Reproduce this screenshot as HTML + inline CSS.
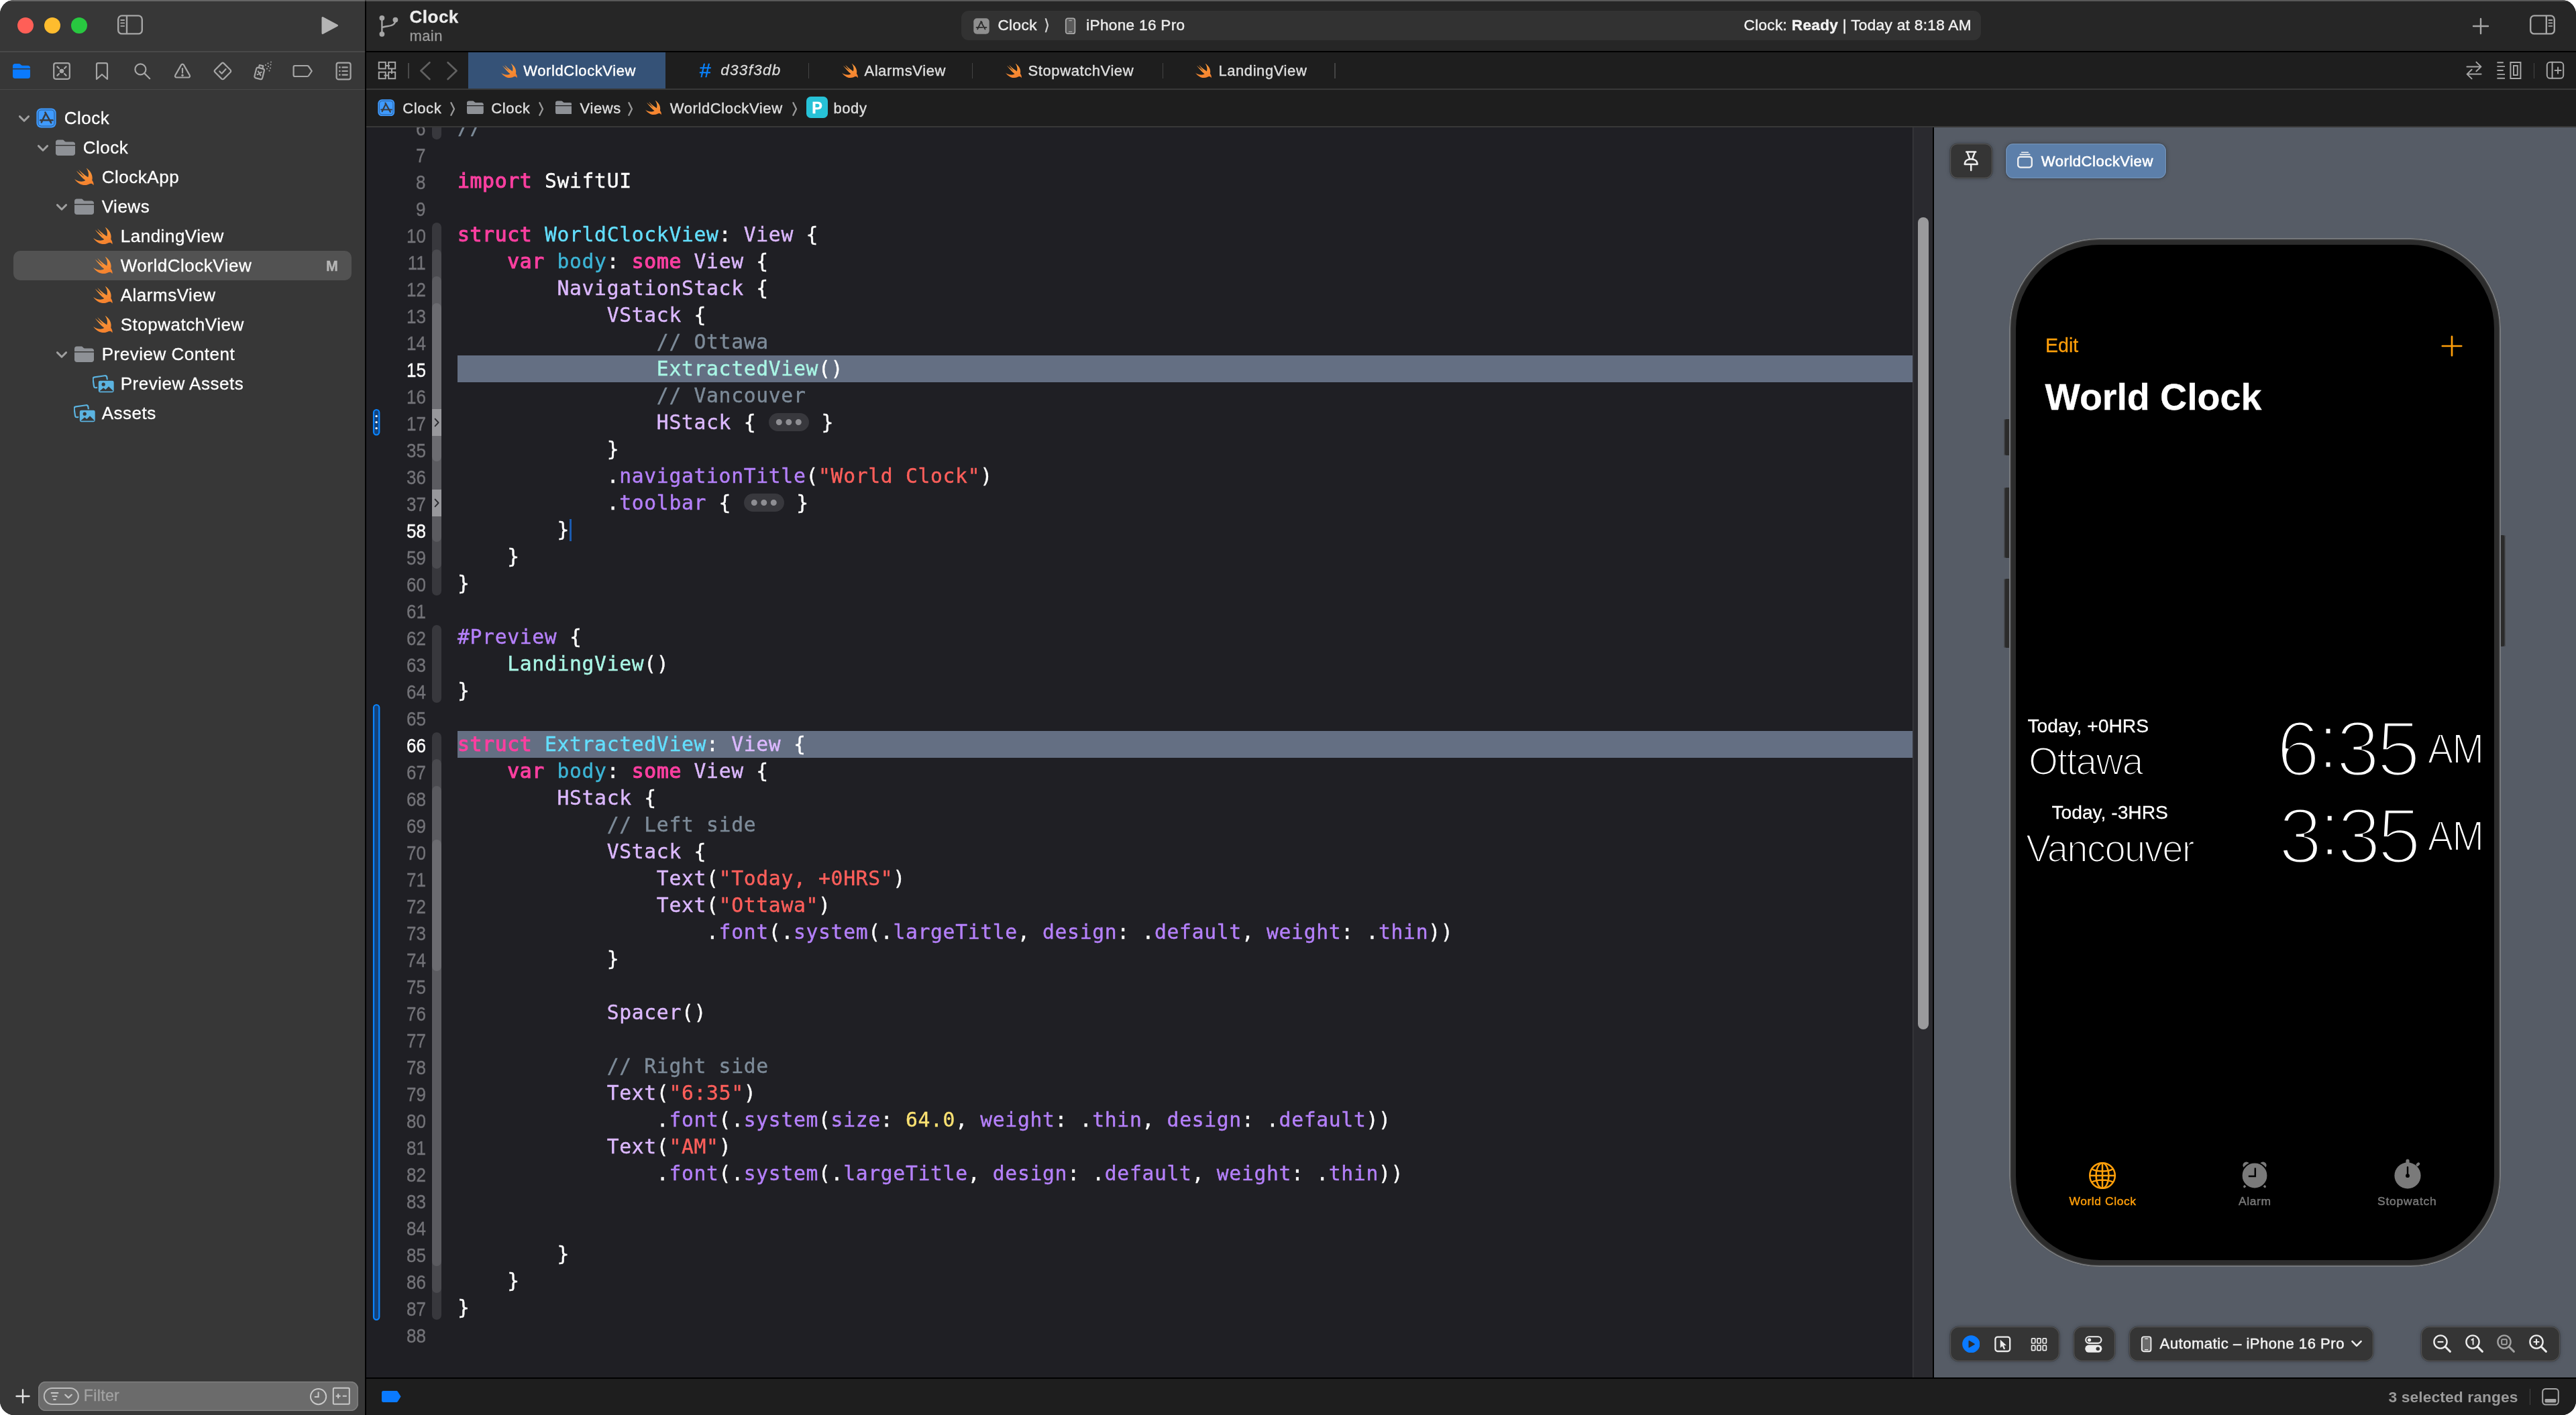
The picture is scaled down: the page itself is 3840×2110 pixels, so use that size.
<!DOCTYPE html>
<html lang="en"><head><meta charset="utf-8"><title>Clock — WorldClockView.swift</title>
<style>
html,body{margin:0;padding:0;background:#fff;}
body{width:3840px;height:2110px;overflow:hidden;position:relative;font-family:"Liberation Sans", sans-serif;}
#win{will-change:transform;position:absolute;left:0;top:0;width:3840px;height:2110px;border-radius:21px;overflow:hidden;background:#1e1e1e;}
.a{position:absolute;display:block;}
.t{position:absolute;white-space:nowrap;line-height:1;font-family:"Liberation Sans", sans-serif;-webkit-text-stroke-width:0.28px;}
.num{transform:scaleX(0.88);transform-origin:100% 50%;}
.cl{position:absolute;left:682.0px;height:40.0px;line-height:40.0px;white-space:pre;font-family:"DejaVu Sans Mono", "Liberation Mono", monospace;font-size:29.7px;color:#e3e3e6;letter-spacing:0.679px;-webkit-text-stroke-width:0.4px;}
.k{color:#fb3fa0;-webkit-text-stroke:1.15px #fb3fa0;}
.td{color:#63dfff;} .od{color:#3db5d6;} .pt{color:#a9f6e5;} .st{color:#dcb8ff;}
.fn{color:#b580fb;} .m{color:#b580fb;} .s{color:#ff5f5b;} .n{color:#fae172;} .c{color:#7d8b99;} .p{color:#fff;}
.fold{display:inline-block;width:60px;height:27px;line-height:27px;vertical-align:middle;margin-top:-3px;background:#38383d;border-radius:13.500px;text-align:center;color:#8e8e93;font-family:"Liberation Sans", sans-serif;font-size:33px;letter-spacing:2.9px;text-indent:2.9px;-webkit-text-stroke-width:0;}
</style></head>
<body><svg width="0" height="0" style="position:absolute"><defs><linearGradient id="sg" x1="0" y1="0" x2="0.300" y2="1"><stop offset="0" stop-color="#fda13e"/><stop offset="1" stop-color="#f5832f"/></linearGradient></defs></svg><div id="win">
<div class="a" style="left:0px;top:0px;width:544px;height:2110px;background:#373737;"></div>
<div class="a" style="left:0px;top:0px;width:3840px;height:1.6px;background:rgba(255,255,255,0.24);z-index:50;"></div>
<div class="a" style="left:26px;top:26px;width:24px;height:24px;background:#ff5f57;border-radius:12px;"></div>
<div class="a" style="left:66px;top:26px;width:24px;height:24px;background:#febc2e;border-radius:12px;"></div>
<div class="a" style="left:106px;top:26px;width:24px;height:24px;background:#28c840;border-radius:12px;"></div>
<svg class="a" style="left:174px;top:21px;" width="40" height="32" viewBox="0 0 40 32"><rect x="2.2" y="2.4" width="35.6" height="27" rx="5.5" fill="none" stroke="#a6a6a6" stroke-width="2.4"/><path d="M15 2.4v27" stroke="#a6a6a6" stroke-width="2.4"/><path d="M6.2 9h5M6.2 13.4h5M6.2 17.8h5" stroke="#a6a6a6" stroke-width="1.8" stroke-linecap="round"/></svg>
<svg class="a" style="left:477px;top:22px;" width="32" height="32" viewBox="0 0 32 32"><path d="M4 4.5v23l21.5-11.5z" fill="#b4b4b4" stroke="#b4b4b4" stroke-width="3" stroke-linejoin="round"/></svg>
<div class="a" style="left:0px;top:76px;width:544px;height:2px;background:#494949;"></div>
<svg class="a" style="left:17.0px;top:90.5px;" width="30" height="30" viewBox="0 0 30 30"><path fill="#0a7aff" d="M2 7.6C2 5.4 3.4 4 5.6 4h5.4c1.1 0 1.8 0.3 2.6 1.1l1 1c0.5 0.5 1 0.7 1.8 0.7h8c2.3 0 3.6 1.3 3.6 3.5V11H2z"/><path fill="#0a7aff" d="M2 12.6h26v9.8c0 2.3-1.3 3.6-3.6 3.6H5.6C3.3 26 2 24.7 2 22.4z"/></svg>
<svg class="a" style="left:77.0px;top:90.5px;" width="30" height="30" viewBox="0 0 30 30"><rect x="3.2" y="3.2" width="23.6" height="23.6" rx="3" fill="none" stroke="#a6a6a6" stroke-width="2.2" stroke-linecap="round" stroke-linejoin="round"/><circle cx="15" cy="15" r="3.3" fill="#a6a6a6"/><path d="M8.400 8.400l2.600 2.600M21.600 8.400l-2.600 2.600M8.400 21.600l2.600-2.600M21.600 21.600l-2.600-2.600" fill="none" stroke="#a6a6a6" stroke-width="2.2" stroke-linecap="round" stroke-linejoin="round" stroke-width="2"/></svg>
<svg class="a" style="left:137.0px;top:90.5px;" width="30" height="30" viewBox="0 0 30 30"><path d="M7 5.4c0-1.4 0.9-2.2 2.2-2.2h11.6c1.3 0 2.2 0.8 2.2 2.2V27l-8-7-8 7z" fill="none" stroke="#a6a6a6" stroke-width="2.2" stroke-linecap="round" stroke-linejoin="round"/></svg>
<svg class="a" style="left:197.0px;top:90.5px;" width="30" height="30" viewBox="0 0 30 30"><circle cx="12.400" cy="12.400" r="8" fill="none" stroke="#a6a6a6" stroke-width="2.2" stroke-linecap="round" stroke-linejoin="round" stroke-width="2.900"/><path d="M18.600 18.600l7.600 7.600" fill="none" stroke="#a6a6a6" stroke-width="2.2" stroke-linecap="round" stroke-linejoin="round" stroke-width="3.400"/></svg>
<svg class="a" style="left:257.0px;top:90.5px;" width="30" height="30" viewBox="0 0 30 30"><path d="M13.200 5.600c0.800-1.400 2.800-1.400 3.600 0l9 15.800c0.800 1.500-0.200 3.100-1.800 3.100H6c-1.600 0-2.600-1.600-1.800-3.100z" fill="none" stroke="#a6a6a6" stroke-width="2.2" stroke-linecap="round" stroke-linejoin="round"/><path d="M15 11.200v6.400" fill="none" stroke="#a6a6a6" stroke-width="2.2" stroke-linecap="round" stroke-linejoin="round" stroke-width="3"/><circle cx="15" cy="21.200" r="1.700" fill="#a6a6a6"/></svg>
<svg class="a" style="left:317.0px;top:90.5px;" width="30" height="30" viewBox="0 0 30 30"><path d="M13.2 3.6c1-1 2.6-1 3.6 0l9.6 9.6c1 1 1 2.6 0 3.6l-9.6 9.6c-1 1-2.6 1-3.6 0L3.600 16.8c-1-1-1-2.6 0-3.6z" fill="none" stroke="#a6a6a6" stroke-width="2.2" stroke-linecap="round" stroke-linejoin="round"/><path d="M10.400 15.400l3.200 3.300 6-6.600" fill="none" stroke="#a6a6a6" stroke-width="2.2" stroke-linecap="round" stroke-linejoin="round"/></svg>
<svg class="a" style="left:376.0px;top:89.5px;" width="32" height="32" viewBox="0 0 32 32"><g transform="rotate(14 11 18)"><rect x="5" y="11.5" width="12" height="16" rx="2.4" fill="none" stroke="#a6a6a6" stroke-width="2.2" stroke-linecap="round" stroke-linejoin="round" stroke-width="2"/><path d="M8.2 11.400V7.400h5.600v4" fill="none" stroke="#a6a6a6" stroke-width="2.2" stroke-linecap="round" stroke-linejoin="round" stroke-width="2"/><path d="M8.6 17l4.800 4.800M13.400 17l-4.800 4.800" fill="none" stroke="#a6a6a6" stroke-width="2.2" stroke-linecap="round" stroke-linejoin="round" stroke-width="1.8"/></g><g fill="#a6a6a6"><circle cx="20" cy="7" r="1.1"/><circle cx="23.500" cy="4.500" r="1.1"/><circle cx="24" cy="9" r="1.1"/><circle cx="27.500" cy="6.500" r="1"/><circle cx="22" cy="12.500" r="1.1"/><circle cx="27" cy="11.500" r="1"/><circle cx="25.500" cy="15.500" r="1"/><circle cx="28" cy="2.500" r="0.9"/></g></svg>
<svg class="a" style="left:436.0px;top:90.5px;" width="32" height="30" viewBox="0 0 32 30"><path d="M3.600 7h18.400c0.900 0 1.500 0.300 2 1l4.800 7-4.800 7c-0.500 0.700-1.100 1-2 1H3.600c-1.300 0-2-0.800-2-2V9c0-1.200 0.700-2 2-2z" fill="none" stroke="#a6a6a6" stroke-width="2.2" stroke-linecap="round" stroke-linejoin="round"/></svg>
<svg class="a" style="left:497.0px;top:90.5px;" width="30" height="30" viewBox="0 0 30 30"><rect x="4.600" y="2.600" width="21" height="24.800" rx="3" fill="none" stroke="#a6a6a6" stroke-width="2.2" stroke-linecap="round" stroke-linejoin="round"/><path d="M13.400 9.400h7.400M13.400 15h7.400M13.400 20.600h7.400" fill="none" stroke="#a6a6a6" stroke-width="2.2" stroke-linecap="round" stroke-linejoin="round" stroke-width="2"/><circle cx="9.400" cy="9.400" r="1.300" fill="#a6a6a6"/><circle cx="9.400" cy="15" r="1.300" fill="#a6a6a6"/><circle cx="9.400" cy="20.600" r="1.300" fill="#a6a6a6"/></svg>
<div class="a" style="left:0px;top:132.5px;width:544px;height:1.6px;background:#494949;"></div>
<svg class="a" style="left:26px;top:169.5px;" width="20" height="14" viewBox="0 0 20 14"><path d="M3.400 3.600l6.600 6.600 6.600-6.600" fill="none" stroke="#a0a0a0" stroke-width="2.900" stroke-linecap="round" stroke-linejoin="round"/></svg>
<svg class="a" style="left:54.0px;top:161.0px;" width="30" height="30" viewBox="0 0 30 30"><rect x="0.4" y="0.4" width="29.2" height="29.2" rx="7" fill="#3f9bff"/><rect x="3" y="3" width="24" height="24" rx="4.4" fill="none" stroke="#2a5c96" stroke-width="1.1"/><g stroke="#3a3d42" stroke-width="2.5" stroke-linecap="round" fill="none"><path d="M13.6 9.4L7.8 21.4"/><path d="M13.4 6.6L22.2 22.2"/><path d="M6.2 18.2h18.2"/></g></svg>
<div class="t" style="left:95.70px;top:163.39px;font-size:26px;color:#fff;letter-spacing:0.52px;-webkit-text-stroke:0.3px #fff;">Clock</div>
<svg class="a" style="left:54px;top:213.5px;" width="20" height="14" viewBox="0 0 20 14"><path d="M3.400 3.600l6.600 6.600 6.600-6.600" fill="none" stroke="#a0a0a0" stroke-width="2.900" stroke-linecap="round" stroke-linejoin="round"/></svg>
<svg class="a" style="left:82.7px;top:207.8px;" width="29" height="24" viewBox="0 0 29 24"><path fill="#8e9196" d="M0 4.2C0 1.9 1.4 0.6 3.6 0.6h6.2c1.2 0 1.9 0.3 2.7 1.1l1 1c0.5 0.5 1 0.7 1.8 0.7h10c2.3 0 3.7 1.4 3.7 3.6V8H0z"/><path fill="#8e9196" d="M0 9.6h29v10.6c0 2.4-1.4 3.8-3.8 3.8H3.8C1.4 24 0 22.6 0 20.2z"/></svg>
<div class="t" style="left:123.70px;top:207.39px;font-size:26px;color:#fff;letter-spacing:0.52px;-webkit-text-stroke:0.3px #fff;">Clock</div>
<svg class="a" style="left:110.9px;top:251.3px;overflow:visible;" width="29" height="25" viewBox="2.75 3.6 17.6 15.9"><path fill="url(#sg)" d="M13.543 3.41c4.114 2.47 6.545 7.162 5.549 11.131-.024.093-.05.181-.076.272l.002.001c2.062 2.538 1.5 5.258 1.236 4.745-1.072-2.086-3.066-1.568-4.088-1.043a6.803 6.803 0 0 1-.281.158l-.02.012-.002.002c-2.115 1.123-4.957 1.205-7.812-.022a12.568 12.568 0 0 1-5.64-4.838c.649.48 1.35.902 2.097 1.252 3.019 1.414 6.051 1.311 8.197-.002C9.651 12.73 7.101 9.67 5.146 7.191a10.628 10.628 0 0 1-1.005-1.384c2.34 2.142 6.038 4.83 7.365 5.576C8.69 8.408 6.208 4.743 6.324 4.86c4.436 4.47 8.528 6.996 8.528 6.996.154.085.27.154.36.213.085-.215.16-.437.224-.668.708-2.588-.09-5.548-1.893-7.992z"/></svg>
<div class="t" style="left:151.70px;top:251.39px;font-size:26px;color:#fff;letter-spacing:0.52px;-webkit-text-stroke:0.3px #fff;">ClockApp</div>
<svg class="a" style="left:82px;top:301.5px;" width="20" height="14" viewBox="0 0 20 14"><path d="M3.400 3.600l6.600 6.600 6.600-6.600" fill="none" stroke="#a0a0a0" stroke-width="2.900" stroke-linecap="round" stroke-linejoin="round"/></svg>
<svg class="a" style="left:110.7px;top:295.8px;" width="29" height="24" viewBox="0 0 29 24"><path fill="#8e9196" d="M0 4.2C0 1.9 1.4 0.6 3.6 0.6h6.2c1.2 0 1.9 0.3 2.7 1.1l1 1c0.5 0.5 1 0.7 1.8 0.7h10c2.3 0 3.7 1.4 3.7 3.6V8H0z"/><path fill="#8e9196" d="M0 9.6h29v10.6c0 2.4-1.4 3.8-3.8 3.8H3.8C1.4 24 0 22.6 0 20.2z"/></svg>
<div class="t" style="left:151.70px;top:295.39px;font-size:26px;color:#fff;letter-spacing:0.52px;-webkit-text-stroke:0.3px #fff;">Views</div>
<svg class="a" style="left:138.9px;top:339.3px;overflow:visible;" width="29" height="25" viewBox="2.75 3.6 17.6 15.9"><path fill="url(#sg)" d="M13.543 3.41c4.114 2.47 6.545 7.162 5.549 11.131-.024.093-.05.181-.076.272l.002.001c2.062 2.538 1.5 5.258 1.236 4.745-1.072-2.086-3.066-1.568-4.088-1.043a6.803 6.803 0 0 1-.281.158l-.02.012-.002.002c-2.115 1.123-4.957 1.205-7.812-.022a12.568 12.568 0 0 1-5.64-4.838c.649.48 1.35.902 2.097 1.252 3.019 1.414 6.051 1.311 8.197-.002C9.651 12.73 7.101 9.67 5.146 7.191a10.628 10.628 0 0 1-1.005-1.384c2.34 2.142 6.038 4.83 7.365 5.576C8.69 8.408 6.208 4.743 6.324 4.86c4.436 4.47 8.528 6.996 8.528 6.996.154.085.27.154.36.213.085-.215.16-.437.224-.668.708-2.588-.09-5.548-1.893-7.992z"/></svg>
<div class="t" style="left:179.70px;top:339.39px;font-size:26px;color:#fff;letter-spacing:0.52px;-webkit-text-stroke:0.3px #fff;">LandingView</div>
<div class="a" style="left:20px;top:374.1px;width:504px;height:43.6px;background:#525252;border-radius:10px;"></div>
<div class="t" style="left:486.00px;top:386.50px;font-size:21.5px;color:#b6b6b6;font-weight:bold;">M</div>
<svg class="a" style="left:138.9px;top:383.3px;overflow:visible;" width="29" height="25" viewBox="2.75 3.6 17.6 15.9"><path fill="url(#sg)" d="M13.543 3.41c4.114 2.47 6.545 7.162 5.549 11.131-.024.093-.05.181-.076.272l.002.001c2.062 2.538 1.5 5.258 1.236 4.745-1.072-2.086-3.066-1.568-4.088-1.043a6.803 6.803 0 0 1-.281.158l-.02.012-.002.002c-2.115 1.123-4.957 1.205-7.812-.022a12.568 12.568 0 0 1-5.64-4.838c.649.48 1.35.902 2.097 1.252 3.019 1.414 6.051 1.311 8.197-.002C9.651 12.73 7.101 9.67 5.146 7.191a10.628 10.628 0 0 1-1.005-1.384c2.34 2.142 6.038 4.83 7.365 5.576C8.69 8.408 6.208 4.743 6.324 4.86c4.436 4.47 8.528 6.996 8.528 6.996.154.085.27.154.36.213.085-.215.16-.437.224-.668.708-2.588-.09-5.548-1.893-7.992z"/></svg>
<div class="t" style="left:179.70px;top:383.39px;font-size:26px;color:#fff;letter-spacing:0.52px;-webkit-text-stroke:0.3px #fff;">WorldClockView</div>
<svg class="a" style="left:138.9px;top:427.3px;overflow:visible;" width="29" height="25" viewBox="2.75 3.6 17.6 15.9"><path fill="url(#sg)" d="M13.543 3.41c4.114 2.47 6.545 7.162 5.549 11.131-.024.093-.05.181-.076.272l.002.001c2.062 2.538 1.5 5.258 1.236 4.745-1.072-2.086-3.066-1.568-4.088-1.043a6.803 6.803 0 0 1-.281.158l-.02.012-.002.002c-2.115 1.123-4.957 1.205-7.812-.022a12.568 12.568 0 0 1-5.64-4.838c.649.48 1.35.902 2.097 1.252 3.019 1.414 6.051 1.311 8.197-.002C9.651 12.73 7.101 9.67 5.146 7.191a10.628 10.628 0 0 1-1.005-1.384c2.34 2.142 6.038 4.83 7.365 5.576C8.69 8.408 6.208 4.743 6.324 4.86c4.436 4.47 8.528 6.996 8.528 6.996.154.085.27.154.36.213.085-.215.16-.437.224-.668.708-2.588-.09-5.548-1.893-7.992z"/></svg>
<div class="t" style="left:179.70px;top:427.39px;font-size:26px;color:#fff;letter-spacing:0.52px;-webkit-text-stroke:0.3px #fff;">AlarmsView</div>
<svg class="a" style="left:138.9px;top:471.3px;overflow:visible;" width="29" height="25" viewBox="2.75 3.6 17.6 15.9"><path fill="url(#sg)" d="M13.543 3.41c4.114 2.47 6.545 7.162 5.549 11.131-.024.093-.05.181-.076.272l.002.001c2.062 2.538 1.5 5.258 1.236 4.745-1.072-2.086-3.066-1.568-4.088-1.043a6.803 6.803 0 0 1-.281.158l-.02.012-.002.002c-2.115 1.123-4.957 1.205-7.812-.022a12.568 12.568 0 0 1-5.64-4.838c.649.48 1.35.902 2.097 1.252 3.019 1.414 6.051 1.311 8.197-.002C9.651 12.73 7.101 9.67 5.146 7.191a10.628 10.628 0 0 1-1.005-1.384c2.34 2.142 6.038 4.83 7.365 5.576C8.69 8.408 6.208 4.743 6.324 4.86c4.436 4.47 8.528 6.996 8.528 6.996.154.085.27.154.36.213.085-.215.16-.437.224-.668.708-2.588-.09-5.548-1.893-7.992z"/></svg>
<div class="t" style="left:179.70px;top:471.39px;font-size:26px;color:#fff;letter-spacing:0.52px;-webkit-text-stroke:0.3px #fff;">StopwatchView</div>
<svg class="a" style="left:82px;top:521.5px;" width="20" height="14" viewBox="0 0 20 14"><path d="M3.400 3.600l6.600 6.600 6.600-6.600" fill="none" stroke="#a0a0a0" stroke-width="2.900" stroke-linecap="round" stroke-linejoin="round"/></svg>
<svg class="a" style="left:110.7px;top:515.8px;" width="29" height="24" viewBox="0 0 29 24"><path fill="#8e9196" d="M0 4.2C0 1.9 1.4 0.6 3.6 0.6h6.2c1.2 0 1.9 0.3 2.7 1.1l1 1c0.5 0.5 1 0.7 1.8 0.7h10c2.3 0 3.7 1.4 3.7 3.6V8H0z"/><path fill="#8e9196" d="M0 9.6h29v10.6c0 2.4-1.4 3.8-3.8 3.8H3.8C1.4 24 0 22.6 0 20.2z"/></svg>
<div class="t" style="left:151.70px;top:515.39px;font-size:26px;color:#fff;letter-spacing:0.52px;-webkit-text-stroke:0.3px #fff;">Preview Content</div>
<svg class="a" style="left:137.9px;top:558.5px;" width="34" height="28" viewBox="0 0 34 28"><g transform="rotate(-8 12 11)"><rect x="1.3" y="2.2" width="21" height="16" rx="3" fill="none" stroke="#5bb3e0" stroke-width="2.2"/></g><rect x="8" y="8" width="24.5" height="19" rx="3.2" fill="#5bb3e0" stroke="#373737" stroke-width="1.6"/><circle cx="16.2" cy="14.2" r="2.6" fill="#373737"/><path d="M10.2 24.6l6-5.4 3.2 2.8 4.6-4.8 6.3 6.2v1.2h-20z" fill="#373737"/></svg>
<div class="t" style="left:179.70px;top:559.39px;font-size:26px;color:#fff;letter-spacing:0.52px;-webkit-text-stroke:0.3px #fff;">Preview Assets</div>
<svg class="a" style="left:109.9px;top:602.5px;" width="34" height="28" viewBox="0 0 34 28"><g transform="rotate(-8 12 11)"><rect x="1.3" y="2.2" width="21" height="16" rx="3" fill="none" stroke="#5bb3e0" stroke-width="2.2"/></g><rect x="8" y="8" width="24.5" height="19" rx="3.2" fill="#5bb3e0" stroke="#373737" stroke-width="1.6"/><circle cx="16.2" cy="14.2" r="2.6" fill="#373737"/><path d="M10.2 24.6l6-5.4 3.2 2.8 4.6-4.8 6.3 6.2v1.2h-20z" fill="#373737"/></svg>
<div class="t" style="left:151.70px;top:603.39px;font-size:26px;color:#fff;letter-spacing:0.52px;-webkit-text-stroke:0.3px #fff;">Assets</div>
<svg class="a" style="left:22px;top:2070px;" width="24" height="24" viewBox="0 0 24 24"><path d="M12 2.500v19M2.500 12h19" stroke="#e4e4e4" stroke-width="2.400" stroke-linecap="round"/></svg>
<div class="a" style="left:56.5px;top:2060px;width:477px;height:44px;background:#6b6b6b;border-radius:11px;box-shadow:inset 0 0 0 1.5px #7e7e7e;"></div>
<svg class="a" style="left:64px;top:2068px;" width="56" height="28" viewBox="0 0 56 28"><rect x="1.800" y="2" width="51" height="24" rx="12" fill="none" stroke="#bdbdbd" stroke-width="2"/><path d="M11.800 9.200h11.400M13.600 14h7.800M15.400 18.800h4.200" stroke="#c4c4c4" stroke-width="2.200"/><path d="M33.200 11.800l4.800 4.600 4.800-4.600" fill="none" stroke="#c4c4c4" stroke-width="2.200" stroke-linecap="round" stroke-linejoin="round"/></svg>
<div class="t" style="left:124.80px;top:2069.76px;font-size:23.2px;color:#a3a3a3;letter-spacing:0.3px;">Filter</div>
<svg class="a" style="left:461px;top:2068.5px;" width="28" height="28" viewBox="0 0 28 28"><circle cx="13.600" cy="13.600" r="11.600" fill="none" stroke="#c8c8c8" stroke-width="2"/><path d="M13.600 6.600v7.400H7.800" fill="none" stroke="#c8c8c8" stroke-width="2"/></svg>
<svg class="a" style="left:495px;top:2068px;" width="28" height="28" viewBox="0 0 28 28"><rect x="1.800" y="1.800" width="24" height="24" rx="1.500" fill="none" stroke="#c8c8c8" stroke-width="2"/><path d="M5.600 13.800h7M9.100 10.300v7M15.800 13.800h6" stroke="#c8c8c8" stroke-width="2"/></svg>
<div class="a" style="left:544px;top:0px;width:2px;height:2110px;background:#000;"></div>
<div class="a" style="left:546px;top:0px;width:3294px;height:76px;background:#262626;"></div>
<div class="a" style="left:546px;top:76px;width:3294px;height:2px;background:#000;"></div>
<svg class="a" style="left:563px;top:21px;" width="34" height="36" viewBox="0 0 34 36"><g fill="#a6a6a6"><circle cx="6.400" cy="5.800" r="3.900"/><circle cx="6.400" cy="29.800" r="3.900"/><circle cx="26.400" cy="8.600" r="3.900"/></g><path d="M6.400 6v24M6.400 20.400c0 0 2-1.600 9-2.400 8-1 11-3.400 11-9.400" fill="none" stroke="#a6a6a6" stroke-width="2.400"/></svg>
<div class="t" style="left:610.50px;top:11.59px;font-size:26px;color:#ececec;font-weight:bold;letter-spacing:0.5px;">Clock</div>
<div class="t" style="left:610.50px;top:42.77px;font-size:22px;color:#9d9d9d;letter-spacing:0.4px;">main</div>
<div class="a" style="left:1433px;top:16px;width:1519.5px;height:44px;background:#323232;border-radius:11px;"></div>
<svg class="a" style="left:1450.5px;top:26.5px;" width="24" height="24" viewBox="0 0 24 24"><rect x="0.300" y="0.300" width="23.400" height="23.400" rx="5" fill="#8f8f8f"/><g stroke="#2c2c2c" stroke-width="1.900" stroke-linecap="round" fill="none"><path d="M10.600 7.200L6.200 16.400"/><path d="M12 5.200l0.900 1.700"/><path d="M11.100 5.200l6.300 11.200"/><path d="M4.600 13.900h9.200"/><path d="M16.500 13.900h2.900"/></g></svg>
<div class="t" style="left:1487.40px;top:27.16px;font-size:22.6px;color:#ebebeb;letter-spacing:0.4px;-webkit-text-stroke-width:0.45px;">Clock</div>
<div class="t" style="left:1556.00px;top:27.15px;font-size:22.5px;color:#d6d6d6;font-family:"DejaVu Sans", sans-serif;-webkit-text-stroke-width:0.7px;">⟩</div>
<svg class="a" style="left:1587px;top:25.5px;" width="18" height="26" viewBox="0 0 18 26"><rect x="1.800" y="1.400" width="13.600" height="22.800" rx="3" fill="#5a5a5a" stroke="#a8a8a8" stroke-width="1.800"/><path d="M6.400 4.600h4.400M6 21.400h5.200" stroke="#a8a8a8" stroke-width="1.300"/></svg>
<div class="t" style="left:1619.30px;top:27.16px;font-size:22.6px;color:#ebebeb;letter-spacing:0.3px;-webkit-text-stroke-width:0.45px;">iPhone 16 Pro</div>
<div class="t" style="left:2599.50px;top:27.16px;font-size:22.6px;color:#f2f2f2;letter-spacing:0.32px;-webkit-text-stroke-width:0.4px;">Clock: <b>Ready</b> | Today at 8:18 AM</div>
<svg class="a" style="left:3685px;top:25.5px;" width="26" height="26" viewBox="0 0 26 26"><path d="M13 2v22M2 13h22" stroke="#a6a6a6" stroke-width="2.400" stroke-linecap="round"/></svg>
<svg class="a" style="left:3770px;top:21px;" width="40" height="32" viewBox="0 0 40 32"><rect x="2.200" y="2.400" width="35.600" height="27" rx="5.500" fill="none" stroke="#a6a6a6" stroke-width="2.400"/><path d="M25.800 2.400v27" stroke="#a6a6a6" stroke-width="2.400"/><path d="M29.400 9h5M29.400 13.400h5M29.400 17.800h5" stroke="#a6a6a6" stroke-width="1.800" stroke-linecap="round"/></svg>
<div class="a" style="left:546px;top:78px;width:3294px;height:54px;background:#1e1e1e;"></div>
<div class="a" style="left:546px;top:132px;width:3294px;height:1.5px;background:#383838;"></div>
<svg class="a" style="left:563px;top:91.4px;" width="28" height="28" viewBox="0 0 28 28"><g fill="none" stroke="#a6a6a6" stroke-width="2"><rect x="1.800" y="1.800" width="10" height="9.600"/><rect x="16.200" y="1.800" width="10" height="9.600"/><rect x="1.800" y="16.600" width="10" height="9.600"/><rect x="16.200" y="16.600" width="10" height="9.600"/><path d="M11.800 7h6.200M21 11.400v7.600M9.400 21.400h6.800"/></g></svg>
<div class="a" style="left:608px;top:94px;width:1.5px;height:22.5px;background:#4a4a4a;"></div>
<svg class="a" style="left:623px;top:89.5px;" width="22" height="32" viewBox="0 0 22 32"><path d="M17.400 3.200L4.400 15.600l13 12.400" fill="none" stroke="#616161" stroke-width="2.700" stroke-linecap="round" stroke-linejoin="round"/></svg>
<svg class="a" style="left:663px;top:89.5px;" width="22" height="32" viewBox="0 0 22 32"><path d="M4.600 3.200L17.600 15.600l-13 12.400" fill="none" stroke="#616161" stroke-width="2.700" stroke-linecap="round" stroke-linejoin="round"/></svg>
<div class="a" style="left:698px;top:78px;width:294px;height:54px;background:#355277;"></div>
<svg class="a" style="left:747px;top:95px;overflow:visible;" width="24" height="21" viewBox="2.75 3.6 17.6 15.9"><path fill="url(#sg)" d="M13.543 3.41c4.114 2.47 6.545 7.162 5.549 11.131-.024.093-.05.181-.076.272l.002.001c2.062 2.538 1.5 5.258 1.236 4.745-1.072-2.086-3.066-1.568-4.088-1.043a6.803 6.803 0 0 1-.281.158l-.02.012-.002.002c-2.115 1.123-4.957 1.205-7.812-.022a12.568 12.568 0 0 1-5.64-4.838c.649.48 1.35.902 2.097 1.252 3.019 1.414 6.051 1.311 8.197-.002C9.651 12.73 7.101 9.67 5.146 7.191a10.628 10.628 0 0 1-1.005-1.384c2.34 2.142 6.038 4.83 7.365 5.576C8.69 8.408 6.208 4.743 6.324 4.86c4.436 4.47 8.528 6.996 8.528 6.996.154.085.27.154.36.213.085-.215.16-.437.224-.668.708-2.588-.09-5.548-1.893-7.992z"/></svg>
<div class="t" style="left:780.30px;top:94.67px;font-size:22px;color:#fff;letter-spacing:0.6px;-webkit-text-stroke-width:0.42px;">WorldClockView</div>
<div class="t" style="left:1042.60px;top:90.10px;font-size:30px;color:#0a84ff;font-style:italic;-webkit-text-stroke:0.5px #0a84ff;">#</div>
<div class="t" style="left:1074.20px;top:94.16px;font-size:22.6px;color:#dcdcdc;letter-spacing:1.25px;font-style:italic;">d33f3db</div>
<div class="a" style="left:1204.5px;top:94px;width:1.5px;height:23px;background:#444;"></div>
<svg class="a" style="left:1254.5px;top:95px;overflow:visible;" width="24" height="21" viewBox="2.75 3.6 17.6 15.9"><path fill="url(#sg)" d="M13.543 3.41c4.114 2.47 6.545 7.162 5.549 11.131-.024.093-.05.181-.076.272l.002.001c2.062 2.538 1.5 5.258 1.236 4.745-1.072-2.086-3.066-1.568-4.088-1.043a6.803 6.803 0 0 1-.281.158l-.02.012-.002.002c-2.115 1.123-4.957 1.205-7.812-.022a12.568 12.568 0 0 1-5.64-4.838c.649.48 1.35.902 2.097 1.252 3.019 1.414 6.051 1.311 8.197-.002C9.651 12.73 7.101 9.67 5.146 7.191a10.628 10.628 0 0 1-1.005-1.384c2.34 2.142 6.038 4.83 7.365 5.576C8.69 8.408 6.208 4.743 6.324 4.86c4.436 4.47 8.528 6.996 8.528 6.996.154.085.27.154.36.213.085-.215.16-.437.224-.668.708-2.588-.09-5.548-1.893-7.992z"/></svg>
<div class="t" style="left:1288.40px;top:94.67px;font-size:22px;color:#dedede;letter-spacing:0.58px;-webkit-text-stroke-width:0.42px;">AlarmsView</div>
<div class="a" style="left:1448.5px;top:94px;width:1.5px;height:23px;background:#444;"></div>
<svg class="a" style="left:1498.5px;top:95px;overflow:visible;" width="24" height="21" viewBox="2.75 3.6 17.6 15.9"><path fill="url(#sg)" d="M13.543 3.41c4.114 2.47 6.545 7.162 5.549 11.131-.024.093-.05.181-.076.272l.002.001c2.062 2.538 1.5 5.258 1.236 4.745-1.072-2.086-3.066-1.568-4.088-1.043a6.803 6.803 0 0 1-.281.158l-.02.012-.002.002c-2.115 1.123-4.957 1.205-7.812-.022a12.568 12.568 0 0 1-5.64-4.838c.649.48 1.35.902 2.097 1.252 3.019 1.414 6.051 1.311 8.197-.002C9.651 12.73 7.101 9.67 5.146 7.191a10.628 10.628 0 0 1-1.005-1.384c2.34 2.142 6.038 4.83 7.365 5.576C8.69 8.408 6.208 4.743 6.324 4.86c4.436 4.47 8.528 6.996 8.528 6.996.154.085.27.154.36.213.085-.215.16-.437.224-.668.708-2.588-.09-5.548-1.893-7.992z"/></svg>
<div class="t" style="left:1532.60px;top:94.67px;font-size:22px;color:#dedede;letter-spacing:0.58px;-webkit-text-stroke-width:0.42px;">StopwatchView</div>
<div class="a" style="left:1732.5px;top:94px;width:1.5px;height:23px;background:#444;"></div>
<svg class="a" style="left:1782px;top:95px;overflow:visible;" width="24" height="21" viewBox="2.75 3.6 17.6 15.9"><path fill="url(#sg)" d="M13.543 3.41c4.114 2.47 6.545 7.162 5.549 11.131-.024.093-.05.181-.076.272l.002.001c2.062 2.538 1.5 5.258 1.236 4.745-1.072-2.086-3.066-1.568-4.088-1.043a6.803 6.803 0 0 1-.281.158l-.02.012-.002.002c-2.115 1.123-4.957 1.205-7.812-.022a12.568 12.568 0 0 1-5.64-4.838c.649.48 1.35.902 2.097 1.252 3.019 1.414 6.051 1.311 8.197-.002C9.651 12.73 7.101 9.67 5.146 7.191a10.628 10.628 0 0 1-1.005-1.384c2.34 2.142 6.038 4.83 7.365 5.576C8.69 8.408 6.208 4.743 6.324 4.86c4.436 4.47 8.528 6.996 8.528 6.996.154.085.27.154.36.213.085-.215.16-.437.224-.668.708-2.588-.09-5.548-1.893-7.992z"/></svg>
<div class="t" style="left:1816.40px;top:94.67px;font-size:22px;color:#dedede;letter-spacing:0.58px;-webkit-text-stroke-width:0.42px;">LandingView</div>
<div class="a" style="left:1989px;top:94px;width:1.5px;height:23px;background:#444;"></div>
<svg class="a" style="left:3674px;top:90px;" width="28" height="30" viewBox="0 0 28 30"><path d="M3.400 9.400h21M17.400 2.600l7 6.800-7 6.800M24.600 20.600h-21M10.600 13.800l-7 6.800 7 6.800" fill="none" stroke="#a6a6a6" stroke-width="2" stroke-linecap="round" stroke-linejoin="round"/></svg>
<svg class="a" style="left:3720px;top:90px;" width="40" height="30" viewBox="0 0 40 30"><path d="M2.400 3.200h9.400M2.400 9.100h11.600M2.400 15h9.400M2.400 20.900h11.600M2.400 26.800h11.600" stroke="#a6a6a6" stroke-width="1.900"/><rect x="22.400" y="3" width="15" height="24" fill="none" stroke="#a6a6a6" stroke-width="2"/><rect x="27" y="8" width="5.800" height="14" fill="none" stroke="#a6a6a6" stroke-width="2"/></svg>
<div class="a" style="left:3776.5px;top:94px;width:1.5px;height:23px;background:#444;"></div>
<svg class="a" style="left:3795px;top:91px;" width="28" height="28" viewBox="0 0 28 28"><rect x="1.800" y="1.800" width="24.400" height="24" rx="4.500" fill="none" stroke="#a6a6a6" stroke-width="2" stroke-linecap="round" stroke-linejoin="round"/><path d="M9.600 1.800v24" fill="none" stroke="#a6a6a6" stroke-width="2" stroke-linecap="round" stroke-linejoin="round"/><path d="M13.600 14h9M18.100 9.500v9" fill="none" stroke="#a6a6a6" stroke-width="2" stroke-linecap="round" stroke-linejoin="round"/></svg>
<div class="a" style="left:546px;top:133.5px;width:3294px;height:55px;background:#1e1e1e;"></div>
<div class="a" style="left:546px;top:188px;width:3294px;height:1.5px;background:#383838;"></div>
<svg class="a" style="left:563px;top:147.6px;" width="25.5" height="25.5" viewBox="0 0 30 30"><rect x="0.4" y="0.4" width="29.2" height="29.2" rx="7" fill="#3f9bff"/><rect x="3" y="3" width="24" height="24" rx="4.4" fill="none" stroke="#2a5c96" stroke-width="1.1"/><g stroke="#3a3d42" stroke-width="2.5" stroke-linecap="round" fill="none"><path d="M13.6 9.4L7.8 21.4"/><path d="M13.4 6.6L22.2 22.2"/><path d="M6.2 18.2h18.2"/></g></svg>
<div class="t" style="left:600.20px;top:151.27px;font-size:22px;color:#dedede;letter-spacing:0.62px;-webkit-text-stroke-width:0.42px;">Clock</div>
<svg class="a" style="left:670.5px;top:151.5px;" width="8" height="21" viewBox="0 0 8 21"><path d="M1.400 1.200l4.600 9.300-4.600 9.300" fill="none" stroke="#9a9a9a" stroke-width="2.300" stroke-linecap="round" stroke-linejoin="round"/></svg>
<svg class="a" style="left:696px;top:149.8px;" width="24.8" height="20.6" viewBox="0 0 29 24"><path fill="#8e9196" d="M0 4.2C0 1.9 1.4 0.6 3.6 0.6h6.2c1.2 0 1.9 0.3 2.7 1.1l1 1c0.5 0.5 1 0.7 1.8 0.7h10c2.3 0 3.7 1.4 3.7 3.6V8H0z"/><path fill="#8e9196" d="M0 9.6h29v10.6c0 2.4-1.4 3.8-3.8 3.8H3.8C1.4 24 0 22.6 0 20.2z"/></svg>
<div class="t" style="left:732.30px;top:151.27px;font-size:22px;color:#dedede;letter-spacing:0.62px;-webkit-text-stroke-width:0.42px;">Clock</div>
<svg class="a" style="left:802.5px;top:151.5px;" width="8" height="21" viewBox="0 0 8 21"><path d="M1.400 1.200l4.600 9.300-4.600 9.300" fill="none" stroke="#9a9a9a" stroke-width="2.300" stroke-linecap="round" stroke-linejoin="round"/></svg>
<svg class="a" style="left:827.7px;top:149.8px;" width="24.8" height="20.6" viewBox="0 0 29 24"><path fill="#8e9196" d="M0 4.2C0 1.9 1.4 0.6 3.6 0.6h6.2c1.2 0 1.9 0.3 2.7 1.1l1 1c0.5 0.5 1 0.7 1.8 0.7h10c2.3 0 3.7 1.4 3.7 3.6V8H0z"/><path fill="#8e9196" d="M0 9.6h29v10.6c0 2.4-1.4 3.8-3.8 3.8H3.8C1.4 24 0 22.6 0 20.2z"/></svg>
<div class="t" style="left:864.50px;top:151.27px;font-size:22px;color:#dedede;letter-spacing:0.62px;-webkit-text-stroke-width:0.42px;">Views</div>
<svg class="a" style="left:936px;top:151.5px;" width="8" height="21" viewBox="0 0 8 21"><path d="M1.400 1.200l4.600 9.300-4.600 9.300" fill="none" stroke="#9a9a9a" stroke-width="2.300" stroke-linecap="round" stroke-linejoin="round"/></svg>
<svg class="a" style="left:962.4px;top:150px;overflow:visible;" width="24" height="21" viewBox="2.75 3.6 17.6 15.9"><path fill="url(#sg)" d="M13.543 3.41c4.114 2.47 6.545 7.162 5.549 11.131-.024.093-.05.181-.076.272l.002.001c2.062 2.538 1.5 5.258 1.236 4.745-1.072-2.086-3.066-1.568-4.088-1.043a6.803 6.803 0 0 1-.281.158l-.02.012-.002.002c-2.115 1.123-4.957 1.205-7.812-.022a12.568 12.568 0 0 1-5.64-4.838c.649.48 1.35.902 2.097 1.252 3.019 1.414 6.051 1.311 8.197-.002C9.651 12.73 7.101 9.67 5.146 7.191a10.628 10.628 0 0 1-1.005-1.384c2.34 2.142 6.038 4.83 7.365 5.576C8.69 8.408 6.208 4.743 6.324 4.86c4.436 4.47 8.528 6.996 8.528 6.996.154.085.27.154.36.213.085-.215.16-.437.224-.668.708-2.588-.09-5.548-1.893-7.992z"/></svg>
<div class="t" style="left:998.70px;top:151.27px;font-size:22px;color:#dedede;letter-spacing:0.62px;-webkit-text-stroke-width:0.42px;">WorldClockView</div>
<svg class="a" style="left:1181px;top:151.5px;" width="8" height="21" viewBox="0 0 8 21"><path d="M1.400 1.200l4.600 9.300-4.600 9.300" fill="none" stroke="#9a9a9a" stroke-width="2.300" stroke-linecap="round" stroke-linejoin="round"/></svg>
<div class="a" style="left:1202px;top:144px;width:32px;height:32px;background:#27c2d7;border-radius:6.5px;"></div>
<div class="t" style="left:1210.30px;top:150.00px;font-size:23.5px;color:#fff;font-weight:bold;">P</div>
<div class="t" style="left:1242.40px;top:151.27px;font-size:22px;color:#dedede;letter-spacing:0.62px;-webkit-text-stroke-width:0.42px;">body</div>
<div class="a" style="left:546px;top:189.5px;width:2337px;height:1864.5px;overflow:hidden;"><div class="a" style="left:-546px;top:-189.5px;width:3840px;height:2110px;"><div class="a" style="left:546px;top:189.5px;width:2305px;height:1864.5px;background:#1f1f24;"></div>
<div class="a" style="left:682.0px;top:530.0px;width:2169.0px;height:40.0px;background:#646f83;"></div>
<div class="a" style="left:682.0px;top:1090.0px;width:2169.0px;height:40.0px;background:#646f83;"></div>
<div class="a" style="left:644px;top:150px;width:14px;height:58.0px;background:#38383d;border-radius:7px;"></div>
<div class="a" style="left:644px;top:332.0px;width:14px;height:556.0px;background:#38383d;border-radius:7px;"></div>
<div class="a" style="left:644px;top:372.0px;width:14px;height:476.0px;background:#4a4a4f;border-radius:7px;"></div>
<div class="a" style="left:644px;top:412.0px;width:14px;height:396.0px;background:#5b5b60;border-radius:7px;"></div>
<div class="a" style="left:644px;top:452.0px;width:14px;height:236.0px;background:#6c6c71;border-radius:7px;"></div>
<div class="a" style="left:644px;top:932.0px;width:14px;height:116.0px;background:#38383d;border-radius:7px;"></div>
<div class="a" style="left:644px;top:1092.0px;width:14px;height:876.0px;background:#38383d;border-radius:7px;"></div>
<div class="a" style="left:644px;top:1132.0px;width:14px;height:796.0px;background:#4a4a4f;border-radius:7px;"></div>
<div class="a" style="left:644px;top:1172.0px;width:14px;height:716.0px;background:#5b5b60;border-radius:7px;"></div>
<div class="a" style="left:644px;top:1252.0px;width:14px;height:196.0px;background:#6c6c71;border-radius:7px;"></div>
<div class="a" style="left:644px;top:610.0px;width:14px;height:40.0px;background:#98989c;"></div>
<svg class="a" style="left:646px;top:622.0px;" width="10" height="16" viewBox="0 0 10 16"><path d="M2.600 2.600l5 5.400-5 5.400" fill="none" stroke="#2c2c30" stroke-width="1.900" stroke-linecap="round" stroke-linejoin="round"/></svg>
<div class="a" style="left:644px;top:730.0px;width:14px;height:40.0px;background:#98989c;"></div>
<svg class="a" style="left:646px;top:742.0px;" width="10" height="16" viewBox="0 0 10 16"><path d="M2.600 2.600l5 5.400-5 5.400" fill="none" stroke="#2c2c30" stroke-width="1.900" stroke-linecap="round" stroke-linejoin="round"/></svg>
<svg class="a" style="left:555px;top:1049px;" width="12" height="921" viewBox="0 0 12 921"><rect x="2" y="2" width="8.300" height="917" rx="4.150" fill="#14427a" stroke="#0a84ff" stroke-width="2.200"/></svg>
<svg class="a" style="left:555px;top:609px;" width="12" height="42" viewBox="0 0 12 42"><rect x="2" y="2" width="8.300" height="37.500" rx="4.150" fill="#14427a" stroke="#0a84ff" stroke-width="2.200"/><g fill="#fff"><circle cx="6.150" cy="11.600" r="1.700"/><circle cx="6.150" cy="20.600" r="1.700"/><circle cx="6.150" cy="29.600" r="1.700"/></g></svg>
<div class="t num" style="right:3205.2px;top:176.62px;font-size:29.5px;color:#737378;-webkit-text-stroke:0.35px #737378">6</div>
<div class="t num" style="right:3205.2px;top:216.62px;font-size:29.5px;color:#737378;-webkit-text-stroke:0.35px #737378">7</div>
<div class="t num" style="right:3205.2px;top:256.62px;font-size:29.5px;color:#737378;-webkit-text-stroke:0.35px #737378">8</div>
<div class="t num" style="right:3205.2px;top:296.62px;font-size:29.5px;color:#737378;-webkit-text-stroke:0.35px #737378">9</div>
<div class="t num" style="right:3205.2px;top:336.62px;font-size:29.5px;color:#737378;-webkit-text-stroke:0.35px #737378">10</div>
<div class="t num" style="right:3205.2px;top:376.62px;font-size:29.5px;color:#737378;-webkit-text-stroke:0.35px #737378">11</div>
<div class="t num" style="right:3205.2px;top:416.62px;font-size:29.5px;color:#737378;-webkit-text-stroke:0.35px #737378">12</div>
<div class="t num" style="right:3205.2px;top:456.62px;font-size:29.5px;color:#737378;-webkit-text-stroke:0.35px #737378">13</div>
<div class="t num" style="right:3205.2px;top:496.62px;font-size:29.5px;color:#737378;-webkit-text-stroke:0.35px #737378">14</div>
<div class="t num" style="right:3205.2px;top:536.62px;font-size:29.5px;color:#fff;-webkit-text-stroke:0.35px #fff">15</div>
<div class="t num" style="right:3205.2px;top:576.62px;font-size:29.5px;color:#737378;-webkit-text-stroke:0.35px #737378">16</div>
<div class="t num" style="right:3205.2px;top:616.62px;font-size:29.5px;color:#737378;-webkit-text-stroke:0.35px #737378">17</div>
<div class="t num" style="right:3205.2px;top:656.62px;font-size:29.5px;color:#737378;-webkit-text-stroke:0.35px #737378">35</div>
<div class="t num" style="right:3205.2px;top:696.62px;font-size:29.5px;color:#737378;-webkit-text-stroke:0.35px #737378">36</div>
<div class="t num" style="right:3205.2px;top:736.62px;font-size:29.5px;color:#737378;-webkit-text-stroke:0.35px #737378">37</div>
<div class="t num" style="right:3205.2px;top:776.62px;font-size:29.5px;color:#fff;-webkit-text-stroke:0.35px #fff">58</div>
<div class="t num" style="right:3205.2px;top:816.62px;font-size:29.5px;color:#737378;-webkit-text-stroke:0.35px #737378">59</div>
<div class="t num" style="right:3205.2px;top:856.62px;font-size:29.5px;color:#737378;-webkit-text-stroke:0.35px #737378">60</div>
<div class="t num" style="right:3205.2px;top:896.62px;font-size:29.5px;color:#737378;-webkit-text-stroke:0.35px #737378">61</div>
<div class="t num" style="right:3205.2px;top:936.62px;font-size:29.5px;color:#737378;-webkit-text-stroke:0.35px #737378">62</div>
<div class="t num" style="right:3205.2px;top:976.62px;font-size:29.5px;color:#737378;-webkit-text-stroke:0.35px #737378">63</div>
<div class="t num" style="right:3205.2px;top:1016.62px;font-size:29.5px;color:#737378;-webkit-text-stroke:0.35px #737378">64</div>
<div class="t num" style="right:3205.2px;top:1056.62px;font-size:29.5px;color:#737378;-webkit-text-stroke:0.35px #737378">65</div>
<div class="t num" style="right:3205.2px;top:1096.62px;font-size:29.5px;color:#fff;-webkit-text-stroke:0.35px #fff">66</div>
<div class="t num" style="right:3205.2px;top:1136.62px;font-size:29.5px;color:#737378;-webkit-text-stroke:0.35px #737378">67</div>
<div class="t num" style="right:3205.2px;top:1176.62px;font-size:29.5px;color:#737378;-webkit-text-stroke:0.35px #737378">68</div>
<div class="t num" style="right:3205.2px;top:1216.62px;font-size:29.5px;color:#737378;-webkit-text-stroke:0.35px #737378">69</div>
<div class="t num" style="right:3205.2px;top:1256.62px;font-size:29.5px;color:#737378;-webkit-text-stroke:0.35px #737378">70</div>
<div class="t num" style="right:3205.2px;top:1296.62px;font-size:29.5px;color:#737378;-webkit-text-stroke:0.35px #737378">71</div>
<div class="t num" style="right:3205.2px;top:1336.62px;font-size:29.5px;color:#737378;-webkit-text-stroke:0.35px #737378">72</div>
<div class="t num" style="right:3205.2px;top:1376.62px;font-size:29.5px;color:#737378;-webkit-text-stroke:0.35px #737378">73</div>
<div class="t num" style="right:3205.2px;top:1416.62px;font-size:29.5px;color:#737378;-webkit-text-stroke:0.35px #737378">74</div>
<div class="t num" style="right:3205.2px;top:1456.62px;font-size:29.5px;color:#737378;-webkit-text-stroke:0.35px #737378">75</div>
<div class="t num" style="right:3205.2px;top:1496.62px;font-size:29.5px;color:#737378;-webkit-text-stroke:0.35px #737378">76</div>
<div class="t num" style="right:3205.2px;top:1536.62px;font-size:29.5px;color:#737378;-webkit-text-stroke:0.35px #737378">77</div>
<div class="t num" style="right:3205.2px;top:1576.62px;font-size:29.5px;color:#737378;-webkit-text-stroke:0.35px #737378">78</div>
<div class="t num" style="right:3205.2px;top:1616.62px;font-size:29.5px;color:#737378;-webkit-text-stroke:0.35px #737378">79</div>
<div class="t num" style="right:3205.2px;top:1656.62px;font-size:29.5px;color:#737378;-webkit-text-stroke:0.35px #737378">80</div>
<div class="t num" style="right:3205.2px;top:1696.62px;font-size:29.5px;color:#737378;-webkit-text-stroke:0.35px #737378">81</div>
<div class="t num" style="right:3205.2px;top:1736.62px;font-size:29.5px;color:#737378;-webkit-text-stroke:0.35px #737378">82</div>
<div class="t num" style="right:3205.2px;top:1776.62px;font-size:29.5px;color:#737378;-webkit-text-stroke:0.35px #737378">83</div>
<div class="t num" style="right:3205.2px;top:1816.62px;font-size:29.5px;color:#737378;-webkit-text-stroke:0.35px #737378">84</div>
<div class="t num" style="right:3205.2px;top:1856.62px;font-size:29.5px;color:#737378;-webkit-text-stroke:0.35px #737378">85</div>
<div class="t num" style="right:3205.2px;top:1896.62px;font-size:29.5px;color:#737378;-webkit-text-stroke:0.35px #737378">86</div>
<div class="t num" style="right:3205.2px;top:1936.62px;font-size:29.5px;color:#737378;-webkit-text-stroke:0.35px #737378">87</div>
<div class="t num" style="right:3205.2px;top:1976.62px;font-size:29.5px;color:#737378;-webkit-text-stroke:0.35px #737378">88</div>
<div class="cl" style="top:169.8px"><span class="c">//</span></div>
<div class="cl" style="top:249.8px"><span class="k">import</span><span class="p"> SwiftUI</span></div>
<div class="cl" style="top:329.8px"><span class="k">struct</span><span class="p"> </span><span class="td">WorldClockView</span><span class="p">: </span><span class="st">View</span><span class="p"> {</span></div>
<div class="cl" style="top:369.8px"><span class="p">    </span><span class="k">var</span><span class="p"> </span><span class="od">body</span><span class="p">: </span><span class="k">some</span><span class="p"> </span><span class="st">View</span><span class="p"> {</span></div>
<div class="cl" style="top:409.8px"><span class="p">        </span><span class="st">NavigationStack</span><span class="p"> {</span></div>
<div class="cl" style="top:449.8px"><span class="p">            </span><span class="st">VStack</span><span class="p"> {</span></div>
<div class="cl" style="top:489.8px"><span class="p">                </span><span class="c">// Ottawa</span></div>
<div class="cl" style="top:529.8px"><span class="p">                </span><span class="pt">ExtractedView</span><span class="p">()</span></div>
<div class="cl" style="top:569.8px"><span class="p">                </span><span class="c">// Vancouver</span></div>
<div class="cl" style="top:609.8px"><span class="p">                </span><span class="st">HStack</span><span class="p"> { </span><span class="fold">•••</span><span class="p"> }</span></div>
<div class="cl" style="top:649.8px"><span class="p">            }</span></div>
<div class="cl" style="top:689.8px"><span class="p">            .</span><span class="fn">navigationTitle</span><span class="p">(</span><span class="s">"World Clock"</span><span class="p">)</span></div>
<div class="cl" style="top:729.8px"><span class="p">            .</span><span class="fn">toolbar</span><span class="p"> { </span><span class="fold">•••</span><span class="p"> }</span></div>
<div class="cl" style="top:769.8px"><span class="p">        }</span></div>
<div class="cl" style="top:809.8px"><span class="p">    }</span></div>
<div class="cl" style="top:849.8px"><span class="p">}</span></div>
<div class="cl" style="top:929.8px"><span class="m">#Preview</span><span class="p"> {</span></div>
<div class="cl" style="top:969.8px"><span class="p">    </span><span class="pt">LandingView</span><span class="p">()</span></div>
<div class="cl" style="top:1009.8px"><span class="p">}</span></div>
<div class="cl" style="top:1089.8px"><span class="k">struct</span><span class="p"> </span><span class="td">ExtractedView</span><span class="p">: </span><span class="st">View</span><span class="p"> {</span></div>
<div class="cl" style="top:1129.8px"><span class="p">    </span><span class="k">var</span><span class="p"> </span><span class="od">body</span><span class="p">: </span><span class="k">some</span><span class="p"> </span><span class="st">View</span><span class="p"> {</span></div>
<div class="cl" style="top:1169.8px"><span class="p">        </span><span class="st">HStack</span><span class="p"> {</span></div>
<div class="cl" style="top:1209.8px"><span class="p">            </span><span class="c">// Left side</span></div>
<div class="cl" style="top:1249.8px"><span class="p">            </span><span class="st">VStack</span><span class="p"> {</span></div>
<div class="cl" style="top:1289.8px"><span class="p">                </span><span class="st">Text</span><span class="p">(</span><span class="s">"Today, +0HRS"</span><span class="p">)</span></div>
<div class="cl" style="top:1329.8px"><span class="p">                </span><span class="st">Text</span><span class="p">(</span><span class="s">"Ottawa"</span><span class="p">)</span></div>
<div class="cl" style="top:1369.8px"><span class="p">                    .</span><span class="fn">font</span><span class="p">(.</span><span class="fn">system</span><span class="p">(.</span><span class="fn">largeTitle</span><span class="p">, </span><span class="fn">design</span><span class="p">: .</span><span class="fn">default</span><span class="p">, </span><span class="fn">weight</span><span class="p">: .</span><span class="fn">thin</span><span class="p">))</span></div>
<div class="cl" style="top:1409.8px"><span class="p">            }</span></div>
<div class="cl" style="top:1489.8px"><span class="p">            </span><span class="st">Spacer</span><span class="p">()</span></div>
<div class="cl" style="top:1569.8px"><span class="p">            </span><span class="c">// Right side</span></div>
<div class="cl" style="top:1609.8px"><span class="p">            </span><span class="st">Text</span><span class="p">(</span><span class="s">"6:35"</span><span class="p">)</span></div>
<div class="cl" style="top:1649.8px"><span class="p">                .</span><span class="fn">font</span><span class="p">(.</span><span class="fn">system</span><span class="p">(</span><span class="fn">size</span><span class="p">: </span><span class="n">64.0</span><span class="p">, </span><span class="fn">weight</span><span class="p">: .</span><span class="fn">thin</span><span class="p">, </span><span class="fn">design</span><span class="p">: .</span><span class="fn">default</span><span class="p">))</span></div>
<div class="cl" style="top:1689.8px"><span class="p">            </span><span class="st">Text</span><span class="p">(</span><span class="s">"AM"</span><span class="p">)</span></div>
<div class="cl" style="top:1729.8px"><span class="p">                .</span><span class="fn">font</span><span class="p">(.</span><span class="fn">system</span><span class="p">(.</span><span class="fn">largeTitle</span><span class="p">, </span><span class="fn">design</span><span class="p">: .</span><span class="fn">default</span><span class="p">, </span><span class="fn">weight</span><span class="p">: .</span><span class="fn">thin</span><span class="p">))</span></div>
<div class="cl" style="top:1849.8px"><span class="p">        }</span></div>
<div class="cl" style="top:1889.8px"><span class="p">    }</span></div>
<div class="cl" style="top:1929.8px"><span class="p">}</span></div>
<div class="a" style="left:848.5px;top:773.5px;width:3px;height:33px;background:#1b5bb0;"></div>
<div class="a" style="left:2851px;top:189.5px;width:30px;height:1864.5px;background:#2a2a2f;box-shadow:inset 1.500px 0 0 #38383d;"></div>
<div class="a" style="left:2859px;top:324px;width:16px;height:1211px;background:#9a9a9c;border-radius:8px;"></div>
<div class="a" style="left:2881px;top:189.5px;width:2px;height:1864.5px;background:#000;"></div></div></div>
<div class="a" style="left:2883px;top:189.5px;width:957px;height:1864.5px;background:#565c66;"></div>
<div class="a" style="left:2907px;top:214px;width:63px;height:52px;background:#353535;border-radius:11px;box-shadow:inset 0 0 0 1.2px rgba(255,255,255,0.15), 0 0 0 0.6px rgba(0,0,0,0.28), 0 0 6px rgba(0,0,0,0.26);"></div>
<svg class="a" style="left:2924px;top:224px;" width="30" height="32" viewBox="0 0 30 32"><g fill="none" stroke="#eeeeee" stroke-width="2.5" stroke-linecap="round" stroke-linejoin="round"><path d="M7.200 2.400h14M8.800 2.800c0.400 4.200 3.200 6.400 3.200 10.400M19.600 2.800c-0.400 4.200-3.200 6.400-3.200 10.400M4.800 21c0-4.800 4-7.700 9.400-7.700s9.400 2.900 9.400 7.700zM14.200 21.400v8.600"/></g></svg>
<div class="a" style="left:2990px;top:214px;width:239px;height:52px;background:#5c7faa;border-radius:11px;box-shadow:inset 0 0 0 1.2px rgba(255,255,255,0.15), 0 0 0 0.6px rgba(0,0,0,0.28), 0 0 6px rgba(0,0,0,0.26);"></div>
<svg class="a" style="left:3006px;top:225px;" width="26" height="28" viewBox="0 0 26 28"><g fill="none" stroke="#f2f2f2" stroke-linecap="round"><rect x="2.200" y="8.800" width="20.600" height="15.800" rx="3.600" stroke-width="2.300"/><path d="M5.400 5.400h14.200" stroke-width="1.800"/><path d="M7.600 2.200h9.800" stroke-width="1.600"/></g></svg>
<div class="t" style="left:3042.80px;top:229.97px;font-size:22px;color:#fff;letter-spacing:0.55px;-webkit-text-stroke-width:0.6px;">WorldClockView</div>
<div class="a" style="left:2986.5px;top:625px;width:12px;height:54px;background:#2b2b2b;border-radius:3px;box-shadow:inset 1.500px 0 0 #4a4d52;"></div>
<div class="a" style="left:2986.5px;top:727px;width:12px;height:105px;background:#2b2b2b;border-radius:3px;box-shadow:inset 1.500px 0 0 #4a4d52;"></div>
<div class="a" style="left:2986.5px;top:863px;width:12px;height:103px;background:#2b2b2b;border-radius:3px;box-shadow:inset 1.500px 0 0 #4a4d52;"></div>
<div class="a" style="left:3723px;top:798px;width:12px;height:166px;background:#2b2b2b;border-radius:3px;box-shadow:inset -1.500px 0 0 #4a4d52;"></div>
<div class="a" style="left:2995px;top:355px;width:732.5px;height:1533.5px;background:#2c2c2c;border-radius:135px;box-shadow:inset 0 0 0 1.8px #7b7e82, inset 0 0 0 3.200px #3a3a3a;"></div>
<div class="a" style="left:3004.7px;top:364.7px;width:713.1px;height:1514.1px;background:#000;border-radius:125.3px;"></div>
<div class="t" style="left:3049.00px;top:501.28px;font-size:28.6px;color:#ff9f0a;">Edit</div>
<svg class="a" style="left:3639px;top:500px;" width="32" height="32" viewBox="0 0 32 32"><path d="M16 1.800v28.400M1.800 16h28.400" stroke="#ff9f0a" stroke-width="2.700" stroke-linecap="round"/></svg>
<div class="t" style="left:3048.50px;top:565.41px;font-size:55.5px;color:#fff;font-weight:bold;">World Clock</div>
<div class="t" style="left:3022.50px;top:1067.62px;font-size:28.2px;color:#fff;">Today, +0HRS</div>
<div class="t" style="left:3024.30px;top:1106.39px;font-size:58px;color:#fff;letter-spacing:-1.7px;-webkit-text-stroke:2.1px #000;paint-order:fill stroke;transform:scaleX(0.977);transform-origin:0 50%;">Ottawa</div>
<div class="t" style="left:3393.50px;top:1057.74px;font-size:117px;color:#fff;letter-spacing:-4.4px;-webkit-text-stroke:5.2px #000;paint-order:fill stroke;">6<span style="position:relative;top:-11px">:</span>35</div>
<div class="t" style="left:3618.80px;top:1084.78px;font-size:62.5px;color:#fff;letter-spacing:-1.5px;-webkit-text-stroke:2.1px #000;paint-order:fill stroke;transform:scaleX(0.91);transform-origin:0 50%;">AM</div>
<div class="t" style="left:3058.50px;top:1197.42px;font-size:28.2px;color:#fff;">Today, -3HRS</div>
<div class="t" style="left:3019.60px;top:1236.29px;font-size:58px;color:#fff;letter-spacing:-1.65px;-webkit-text-stroke:2.1px #000;paint-order:fill stroke;transform:scaleX(0.968);transform-origin:0 50%;">Vancouver</div>
<div class="t" style="left:3396.50px;top:1187.74px;font-size:117px;color:#fff;letter-spacing:-5.1px;-webkit-text-stroke:5.2px #000;paint-order:fill stroke;">3<span style="position:relative;top:-11px">:</span>35</div>
<div class="t" style="left:3618.80px;top:1214.78px;font-size:62.5px;color:#fff;letter-spacing:-1.5px;-webkit-text-stroke:2.1px #000;paint-order:fill stroke;transform:scaleX(0.91);transform-origin:0 50%;">AM</div>
<svg class="a" style="left:3112px;top:1731px;" width="44" height="44" viewBox="0 0 44 44"><g fill="none" stroke="#ff9f0a" stroke-width="2.500"><circle cx="22" cy="22" r="18.800"/><ellipse cx="22" cy="22" rx="9.400" ry="18.800"/><path d="M22 3.200v37.600M3.200 22h37.600M6 12.200c4.400 2.400 10 3.400 16 3.400s11.600-1 16-3.400M6 31.800c4.400-2.400 10-3.400 16-3.400s11.600 1 16 3.400"/></g></svg>
<div class="t" style="left:3084.50px;top:1783.27px;font-size:17.4px;color:#ff9f0a;letter-spacing:0.6px;-webkit-text-stroke:0.45px #ff9f0a;">World Clock</div>
<svg class="a" style="left:3336.6px;top:1727.8px;" width="48" height="48" viewBox="0 0 48 48"><circle cx="11.600" cy="9.600" r="5.200" fill="#7a7a7a"/><circle cx="36.400" cy="9.600" r="5.200" fill="#7a7a7a"/><path d="M13 37l-4.200 4.400M35 37l4.200 4.400" stroke="#7a7a7a" stroke-width="3.400" stroke-linecap="round"/><circle cx="24" cy="25" r="19.500" fill="#7a7a7a" stroke="#000" stroke-width="2.200"/><path d="M24.800 13.400v12.600h-10" fill="none" stroke="#000" stroke-width="2.500"/></svg>
<div class="t" style="left:3337.00px;top:1783.27px;font-size:17.4px;color:#7a7a7a;letter-spacing:0.65px;-webkit-text-stroke:0.45px #7a7a7a;">Alarm</div>
<svg class="a" style="left:3564.6px;top:1724.4px;" width="48" height="52" viewBox="0 0 48 52"><circle cx="24" cy="29" r="19.600" fill="#7a7a7a"/><path d="M24 7.200v3.400" stroke="#7a7a7a" stroke-width="5.200" stroke-linecap="round"/><path d="M38.600 13l1.600-1.600" stroke="#7a7a7a" stroke-width="4.200" stroke-linecap="round"/><circle cx="24" cy="29.200" r="2.900" fill="#000"/><path d="M24 16.400v13" stroke="#000" stroke-width="2.400" stroke-linecap="round"/></svg>
<div class="t" style="left:3544.00px;top:1783.27px;font-size:17.4px;color:#7a7a7a;letter-spacing:0.82px;-webkit-text-stroke:0.45px #7a7a7a;">Stopwatch</div>
<div class="a" style="left:2907px;top:1978px;width:162.5px;height:52px;background:#353535;border-radius:13px;box-shadow:inset 0 0 0 1.2px rgba(255,255,255,0.15), 0 0 0 0.6px rgba(0,0,0,0.28), 0 0 6px rgba(0,0,0,0.26);"></div>
<div class="a" style="left:3090.5px;top:1978px;width:62.5px;height:52px;background:#353535;border-radius:13px;box-shadow:inset 0 0 0 1.2px rgba(255,255,255,0.15), 0 0 0 0.6px rgba(0,0,0,0.28), 0 0 6px rgba(0,0,0,0.26);"></div>
<div class="a" style="left:3173.5px;top:1978px;width:364px;height:52px;background:#353535;border-radius:13px;box-shadow:inset 0 0 0 1.2px rgba(255,255,255,0.15), 0 0 0 0.6px rgba(0,0,0,0.28), 0 0 6px rgba(0,0,0,0.26);"></div>
<div class="a" style="left:3608.5px;top:1978px;width:207px;height:52px;background:#353535;border-radius:13px;box-shadow:inset 0 0 0 1.2px rgba(255,255,255,0.15), 0 0 0 0.6px rgba(0,0,0,0.28), 0 0 6px rgba(0,0,0,0.26);"></div>
<svg class="a" style="left:2924.7px;top:1990.5px;" width="26.6" height="26.6" viewBox="0 0 27 27"><circle cx="13.500" cy="13.500" r="13.300" fill="#0a7aff"/><path d="M10.400 8.800v9.400l8-4.700z" fill="#2e2e2e" stroke="#2e2e2e" stroke-width="1.500" stroke-linejoin="round"/></svg>
<svg class="a" style="left:2971.5px;top:1990.5px;" width="27" height="27" viewBox="0 0 27 27"><rect x="2.400" y="2.600" width="21.800" height="21.400" rx="3.400" fill="none" stroke="#ececec" stroke-width="2.300"/><path d="M9.800 6.800v12.200l3-2.800 2.200 5 2.200-1-2.200-5h4z" fill="#ececec"/></svg>
<svg class="a" style="left:3026.5px;top:1994px;" width="25" height="21" viewBox="0 0 25 21"><rect x="1.6" y="1.8" width="5.200" height="7.200" rx="0.900" fill="none" stroke="#ececec" stroke-width="1.700"/><rect x="9.9" y="1.8" width="5.200" height="7.200" rx="0.900" fill="none" stroke="#ececec" stroke-width="1.700"/><rect x="18.2" y="1.8" width="5.200" height="7.200" rx="0.900" fill="none" stroke="#ececec" stroke-width="1.700"/><rect x="1.6" y="12.4" width="5.200" height="7.200" rx="0.900" fill="none" stroke="#ececec" stroke-width="1.700"/><rect x="9.9" y="12.4" width="5.200" height="7.200" rx="0.900" fill="none" stroke="#ececec" stroke-width="1.700"/><rect x="18.2" y="12.4" width="5.200" height="7.200" rx="0.900" fill="none" stroke="#ececec" stroke-width="1.700"/></svg>
<svg class="a" style="left:3108.3px;top:1991.8px;" width="26" height="25.2" viewBox="0 0 28 27"><rect x="1.300" y="1.300" width="25" height="10.400" rx="5.200" fill="none" stroke="#ececec" stroke-width="2.300"/><circle cx="7" cy="6.500" r="2.900" fill="#ececec"/><rect x="0.300" y="14.600" width="27" height="12" rx="6" fill="#ececec"/><circle cx="20.800" cy="20.600" r="3" fill="#353535"/></svg>
<svg class="a" style="left:3191px;top:1991.5px;" width="18" height="25" viewBox="0 0 18 25"><rect x="1.800" y="1.400" width="13.600" height="21.800" rx="3" fill="#6b6b6b" stroke="#ececec" stroke-width="1.900"/><path d="M6.400 4.400h4.400M6 20.600h5.200" stroke="#ececec" stroke-width="1.300"/></svg>
<div class="t" style="left:3219.50px;top:1993.07px;font-size:22px;color:#f2f2f2;letter-spacing:0.55px;-webkit-text-stroke-width:0.5px;">Automatic – iPhone 16 Pro</div>
<svg class="a" style="left:3503.5px;top:1997px;" width="18" height="14" viewBox="0 0 18 14"><path d="M2.400 3.200l6.600 6.600 6.600-6.600" fill="none" stroke="#ececec" stroke-width="2.600" stroke-linecap="round" stroke-linejoin="round"/></svg>
<svg class="a" style="left:3624.6px;top:1988.3px;" width="32" height="32" viewBox="0 0 32 32"><circle cx="13" cy="13" r="9.600" fill="none" stroke="#ececec" stroke-width="2.400"/><path d="M20 20l7.400 7.400" stroke="#ececec" stroke-width="3" stroke-linecap="round"/><path d="M8.600 13h8.800" stroke="#ececec" stroke-width="2.200"/></svg>
<svg class="a" style="left:3672.6px;top:1988.3px;" width="32" height="32" viewBox="0 0 32 32"><circle cx="13" cy="13" r="9.600" fill="none" stroke="#ececec" stroke-width="2.400"/><path d="M20 20l7.400 7.400" stroke="#ececec" stroke-width="3" stroke-linecap="round"/><path d="M10.800 10.400l2.800-1.800v9" fill="none" stroke="#ececec" stroke-width="1.900"/></svg>
<svg class="a" style="left:3720.3px;top:1988.3px;" width="32" height="32" viewBox="0 0 32 32"><circle cx="13" cy="13" r="9.600" fill="none" stroke="#a2a2a2" stroke-width="2.400"/><path d="M20 20l7.400 7.400" stroke="#a2a2a2" stroke-width="3" stroke-linecap="round"/><rect x="9.200" y="9.200" width="7.600" height="7.600" rx="1.200" fill="none" stroke="#a2a2a2" stroke-width="2"/></svg>
<svg class="a" style="left:3768.4px;top:1988.3px;" width="32" height="32" viewBox="0 0 32 32"><circle cx="13" cy="13" r="9.600" fill="none" stroke="#ececec" stroke-width="2.400"/><path d="M20 20l7.400 7.400" stroke="#ececec" stroke-width="3" stroke-linecap="round"/><path d="M8.600 13h8.800M13 8.600v8.800" stroke="#ececec" stroke-width="2.200"/></svg>
<div class="a" style="left:546px;top:2054px;width:3294px;height:2px;background:#000;"></div>
<div class="a" style="left:546px;top:2056px;width:3294px;height:54px;background:#1e1e1e;"></div>
<svg class="a" style="left:568px;top:2073px;" width="32" height="20" viewBox="0 0 32 20"><path d="M3.400 1h19c1.200 0 2 0.400 2.600 1.300l4.600 7.200-4.600 7.200c-0.600 0.900-1.400 1.300-2.600 1.300h-19C1.800 18 1 17 1 15.600V3.400C1 2 1.800 1 3.400 1z" fill="#0a7aff"/></svg>
<div class="t" style="left:3560.50px;top:2071.70px;font-size:22.8px;color:#9b9b9b;font-weight:bold;letter-spacing:0.1px;-webkit-text-stroke-width:0;">3 selected ranges</div>
<div class="a" style="left:3770.5px;top:2071px;width:1.5px;height:23.5px;background:#444;"></div>
<svg class="a" style="left:3788px;top:2069px;" width="28" height="28" viewBox="0 0 28 28"><rect x="2.200" y="2" width="23.600" height="23.600" rx="4.500" fill="none" stroke="#a6a6a6" stroke-width="2"/><rect x="5.600" y="17" width="16.800" height="5.400" rx="1.400" fill="#a6a6a6"/></svg>
</div></body></html>
